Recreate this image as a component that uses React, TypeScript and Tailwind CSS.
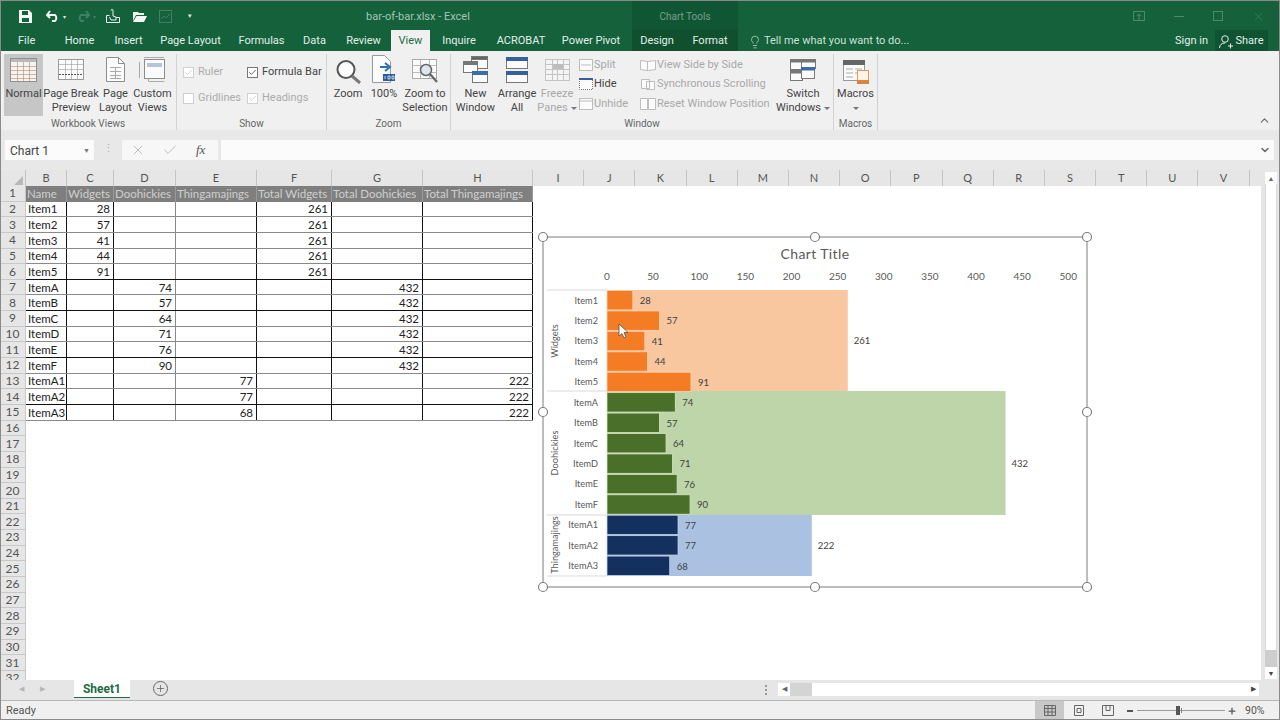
import type { ReactNode } from "react";
import { ChevronDown, ChevronUp, Lightbulb, Plus, X, Check } from "lucide-react";

const COLS = [
  { n: "B", w: "w-[41px]" },
  { n: "C", w: "w-[47px]" },
  { n: "D", w: "w-[62px]" },
  { n: "E", w: "w-[81px]" },
  { n: "F", w: "w-[75px]" },
  { n: "G", w: "w-[91px]" },
  { n: "H", w: "w-[110px]" },
];
const EMPTY_COLS = "IJKLMNOPQRSTUV".split("");

const HEAD = ["Name", "Widgets", "Doohickies", "Thingamajings", "Total Widgets", "Total Doohickies", "Total Thingamajings"];

// name, value column index, value, total
const ROWS: [string, number, number, number][] = [
  ["Item1", 1, 28, 261],
  ["Item2", 1, 57, 261],
  ["Item3", 1, 41, 261],
  ["Item4", 1, 44, 261],
  ["Item5", 1, 91, 261],
  ["ItemA", 2, 74, 432],
  ["ItemB", 2, 57, 432],
  ["ItemC", 2, 64, 432],
  ["ItemD", 2, 71, 432],
  ["ItemE", 2, 76, 432],
  ["ItemF", 2, 90, 432],
  ["ItemA1", 3, 77, 222],
  ["ItemA2", 3, 77, 222],
  ["ItemA3", 3, 68, 222],
];

const TABS = [
  { t: "Home", c: "w-[53px]" },
  { t: "Insert", c: "w-[45px]" },
  { t: "Page Layout", c: "w-[79px]" },
  { t: "Formulas", c: "w-[63px]" },
  { t: "Data", c: "w-[43px]" },
  { t: "Review", c: "w-[55px]" },
];

const Caret = () => <span className="ml-[3px] inline-block h-0 w-0 border-x-[3px] border-t-[3px] border-x-transparent border-t-[#777] align-middle" />;

function Big({ w, icon, lines, dim, sel, caret }: { w: string; icon: ReactNode; lines: string[]; dim?: boolean; sel?: boolean; caret?: boolean }) {
  return (
    <div className={`${w} flex h-[62px] shrink-0 flex-col items-center ${sel ? "bg-[#c6c6c6]" : ""}`}>
      <div className="flex h-[33px] items-center justify-center pb-[2px]">{icon}</div>
      <div className={`text-center text-[11px] leading-[14px] whitespace-nowrap ${dim ? "text-[#a8a8a8]" : "text-[#444]"}`}>
        {lines.map((l, i) => (
          <div key={l}>
            {l}
            {caret && i === lines.length - 1 && <Caret />}
          </div>
        ))}
      </div>
    </div>
  );
}

function Group({ w, label, children }: { w: string; label: string; children: ReactNode }) {
  return (
    <div className={`${w} flex h-[76px] shrink-0 flex-col border-r border-[#d2d2d2]`}>
      <div className="flex h-[62px] items-start">{children}</div>
      <div className="mt-[2px] text-center text-[10px] leading-[12px] text-[#666]">{label}</div>
    </div>
  );
}

function CheckRow({ w, label, on, dim }: { w: string; label: string; on?: boolean; dim?: boolean }) {
  return (
    <div className={`${w} flex items-center gap-[4px]`}>
      <span className={`flex h-[11px] w-[11px] shrink-0 items-center justify-center border bg-white ${dim ? "border-[#d0d0d0]" : "border-[#777]"}`}>
        {on && <Check size={9} strokeWidth={2} className={dim ? "text-[#c4c4c4]" : "text-[#333]"} />}
      </span>
      <span className={`text-[11px] whitespace-nowrap ${dim ? "text-[#acacac]" : "text-[#444]"}`}>{label}</span>
    </div>
  );
}

function SmallRow({ icon, label, dim }: { icon: ReactNode; label: string; dim?: boolean }) {
  return (
    <div className="flex h-[19.5px] items-center gap-[1px]">
      {icon}
      <span className={`text-[11px] whitespace-nowrap ${dim ? "text-[#a8a8a8]" : "text-[#444]"}`}>{label}</span>
    </div>
  );
}

const NormalIcon = (
  <svg width="27" height="24" viewBox="0 0 27 24" fill="none" stroke="#8f8f8f">
    <rect x=".5" y=".5" width="26" height="23" fill="#f6f4f0" />
    <rect x="1" y="1" width="25" height="3" fill="#b9b9b9" stroke="none" />
    <path d="M1 8.500h25M1 12.500h25M1 16.500h25M1 20.500h25M7.500 4v19M13.500 4v19M19.500 4v19" stroke="#b08c6c" strokeWidth=".6" />
  </svg>
);
const BreakIcon = (
  <svg width="26" height="21" viewBox="0 0 26 21" fill="#fbfbfb" stroke="#9a9a9a">
    <rect x=".5" y=".5" width="25" height="20" />
    <path d="M1 5.500h24M1 10.500h24M7.500 1v19M13.500 1v19M19.500 1v19" strokeWidth=".6" fill="none" />
    <path d="M1 15.500h24" stroke="#555" strokeDasharray="2 1" fill="none" />
  </svg>
);
const LayoutIcon = (
  <svg width="19" height="25" viewBox="0 0 19 25" fill="#fbfbfb" stroke="#8c8c8c">
    <path d="M.5.5h12l6 6v18H.5z" />
    <path d="M12.500.5v6h6" fill="none" />
    <path d="M4 10.500h11M4 14.500h11M4 18.500h11M4 21.500h11M9.500 10v12" stroke="#a9a9a9" fill="none" />
  </svg>
);
const CustomIcon = (
  <svg width="27" height="25" viewBox="0 0 27 25" fill="none" stroke="#8c8c8c">
    <rect x="5.500" y="2.500" width="20" height="19" fill="#fbfbfb" />
    <rect x="8" y="6" width="15" height="4" fill="#b7c4d8" stroke="none" />
    <path d="M.5 5v16M5 .5h20" stroke="#aaa" />
    <path d="M9.500 21.500v3h16" stroke="#aaa" />
  </svg>
);
const ZoomIcon = (
  <svg width="25" height="24" viewBox="0 0 25 24" fill="none" className="translate-y-[2px]">
    <circle cx="10" cy="9.500" r="8.500" stroke="#555" strokeWidth="2" fill="#fff" />
    <path d="M16 16l8 7" stroke="#777" strokeWidth="3" />
  </svg>
);
const HundredIcon = (
  <svg width="25" height="29" viewBox="0 0 25 29" fill="none">
    <path d="M.5.5h12l6 6v21H.5z" fill="#fbfbfb" stroke="#999" />
    <path d="M8 12h8M13 8l5 4-5 4" stroke="#2a6fb5" strokeWidth="2" />
    <rect x="11" y="19" width="12" height="7" fill="#2d5c96" />
    <path d="M13 21v3M16 21h2v3h-2zM20 21h2v3h-2z" stroke="#fff" strokeWidth=".7" />
  </svg>
);
const SelIcon = (
  <svg width="27" height="26" viewBox="0 0 27 26" fill="none" className="translate-y-[2px]">
    <rect x=".5" y=".5" width="24" height="19" fill="#fafafa" stroke="#aaa" />
    <path d="M1 6.500h23M1 13.500h23M8.500 1v18M17.500 1v18" stroke="#bbb" />
    <circle cx="14" cy="11" r="5.500" stroke="#666" strokeWidth="1.500" fill="#dfe6f0" />
    <path d="M18 15l7 8" stroke="#666" strokeWidth="2.200" />
  </svg>
);
const NewWinIcon = (
  <svg width="25" height="27" viewBox="0 0 25 27" fill="#fbfbfb" stroke="#777">
    <rect x="8.500" y=".5" width="16" height="12" />
    <rect x="8.500" y=".5" width="16" height="3" fill="#666" />
    <rect x=".5" y="5.500" width="14" height="11" />
    <rect x=".5" y="5.500" width="14" height="3" fill="#777" />
    <rect x="9.500" y="15.500" width="15" height="11" />
    <rect x="9.500" y="15.500" width="15" height="3" fill="#3b6ca8" stroke="#3b6ca8" />
  </svg>
);
const ArrangeIcon = (
  <svg width="22" height="26" viewBox="0 0 22 26" fill="#fbfbfb" stroke="#777">
    <rect x=".5" y=".5" width="21" height="11" />
    <rect x=".5" y=".5" width="21" height="3" fill="#34619e" stroke="#34619e" />
    <rect x=".5" y="14.500" width="21" height="11" />
    <rect x=".5" y="14.500" width="21" height="3" fill="#34619e" stroke="#34619e" />
  </svg>
);
const FreezeIcon = (
  <svg width="25" height="22" viewBox="0 0 25 22" fill="#f4f4f4" stroke="#c4c4c4">
    <rect x=".5" y=".5" width="24" height="21" />
    <path d="M1 5.500h23M1 10.500h23M1 15.500h23M7.500 1v20M12.500 1v20M18.500 1v20" fill="none" />
    <rect x="8" y="5" width="10" height="5" fill="#bdbdbd" stroke="none" />
  </svg>
);
const SwitchIcon = (
  <svg width="26" height="22" viewBox="0 0 26 22" fill="#fbfbfb" stroke="#777">
    <rect x=".5" y=".5" width="13" height="10" />
    <rect x=".5" y=".5" width="13" height="2.500" fill="#777" />
    <rect x="11.500" y=".5" width="14" height="9" />
    <rect x="11.500" y=".5" width="14" height="2.500" fill="#777" />
    <rect x=".5" y="11.500" width="12" height="10" />
    <rect x=".5" y="11.500" width="12" height="2.500" fill="#777" />
    <rect x="11.500" y="8.500" width="13" height="11" />
    <rect x="11.500" y="8.500" width="13" height="2.500" fill="#3b6ca8" stroke="#3b6ca8" />
  </svg>
);
const MacroIcon = (
  <svg width="26" height="24" viewBox="0 0 26 24" fill="#fbfbfb" stroke="#999" className="translate-y-[2px]">
    <rect x=".5" y=".5" width="21" height="20" />
    <rect x="0" y="0" width="22" height="5" fill="#666" stroke="none" />
    <path d="M3 9h7M12 9h7M3 13h7M12 13h3M3 17h7" fill="none" stroke="#aaa" />
    <rect x="14.500" y="10.500" width="11" height="13" fill="#fdf3e6" stroke="#d99a5e" />
    <rect x="14" y="20" width="12" height="4" fill="#e0823a" stroke="none" />
  </svg>
);
const HideIcon = (
  <svg width="14" height="12" viewBox="0 0 14 12" fill="#fbfbfb" className="shrink-0">
    <rect x=".5" y="1" width="13" height="10.500" stroke="#777" strokeDasharray="1 1" />
    <rect x="0" y="0" width="14" height="2" fill="#34619e" />
  </svg>
);
const mini = (d: string, c = "#bdbdbd") => (
  <svg width="14" height="12" viewBox="0 0 14 12" fill="#fbfbfb" stroke={c} className="shrink-0">
    <rect x=".5" y=".5" width="13" height="11" />
    <path d={d} fill="none" />
  </svg>
);
const wide = (d: string) => (
  <svg width="16" height="12" viewBox="0 0 16 12" fill="#fbfbfb" stroke="#bdbdbd" className="shrink-0">
    <path d={d} />
  </svg>
);

function Ribbon() {
  return (
    <div className="flex h-[79px] shrink-0 bg-[#f0f0f0] pt-[3px]">
      <Group w="w-[177px]" label="Workbook Views">
        <div className="ml-1">
          <Big w="w-[39px]" sel icon={NormalIcon} lines={["Normal"]} />
        </div>
        <Big w="w-[56px]" icon={BreakIcon} lines={["Page Break", "Preview"]} />
        <Big w="w-[33px]" icon={LayoutIcon} lines={["Page", "Layout"]} />
        <Big w="w-[41px]" icon={CustomIcon} lines={["Custom", "Views"]} />
      </Group>
      <Group w="w-[150px]" label="Show">
        <div className="flex flex-col gap-[7px] pl-[6px] pt-[9px]">
          <div className="flex h-[19px] items-center">
            <CheckRow w="w-[64px]" label="Ruler" on dim />
            <CheckRow w="w-[76px]" label="Formula Bar" on />
          </div>
          <div className="flex h-[19px] items-center">
            <CheckRow w="w-[64px]" label="Gridlines" dim />
            <CheckRow w="w-[76px]" label="Headings" on dim />
          </div>
        </div>
      </Group>
      <Group w="w-[124px]" label="Zoom">
        <div className="ml-[3px]">
          <Big w="w-[36px]" icon={ZoomIcon} lines={["Zoom"]} />
        </div>
        <Big w="w-[36px]" icon={HundredIcon} lines={["100%"]} />
        <Big w="w-[46px]" icon={SelIcon} lines={["Zoom to", "Selection"]} />
      </Group>
      <Group w="w-[383px]" label="Window">
        <div className="ml-1">
          <Big w="w-[41px]" icon={NewWinIcon} lines={["New", "Window"]} />
        </div>
        <Big w="w-[42px]" icon={ArrangeIcon} lines={["Arrange", "All"]} />
        <Big w="w-[38px]" dim caret icon={FreezeIcon} lines={["Freeze", "Panes"]} />
        <div className="ml-[3px] flex w-[61px] shrink-0 flex-col pt-[1px]">
          <SmallRow dim icon={mini("M2 6h10")} label="Split" />
          <SmallRow icon={HideIcon} label="Hide" />
          <SmallRow dim icon={mini("M1 3h12")} label="Unhide" />
        </div>
        <div className="flex w-[137px] shrink-0 flex-col pt-[1px]">
          <SmallRow dim icon={wide("M.5 1.500l7 1v9l-7-1zM15.500 1.500l-8 1v9l8-1z")} label="View Side by Side" />
          <SmallRow dim icon={wide("M1.500 1.500h8v9h-8zM6.500 3.500h8v8h-8z")} label="Synchronous Scrolling" />
          <SmallRow dim icon={wide("M.5.5h7v11h-7zM8.500.5h7v11h-7z")} label="Reset Window Position" />
        </div>
        <Big w="w-[52px]" caret icon={SwitchIcon} lines={["Switch", "Windows"]} />
      </Group>
      <Group w="w-[44px]" label="Macros">
        <div className="flex w-[44px] flex-col items-center">
          <div className="flex h-[33px] items-center justify-center pb-[2px]">{MacroIcon}</div>
          <div className="text-[11px] leading-[14px] text-[#444]">Macros</div>
          <div className="flex h-[14px] items-center">
            <span className="h-0 w-0 border-x-[3px] border-t-[3px] border-x-transparent border-t-[#777]" />
          </div>
        </div>
      </Group>
      <div className="flex flex-1 items-end justify-end pb-[3px] pr-[9px]">
        <ChevronUp size={13} className="text-[#666]" />
      </div>
    </div>
  );
}

function TitleBar() {
  return (
    <div className="relative flex h-[30px] shrink-0 items-center bg-[#14613c] pt-[2px]">
      <div className="flex w-[366px] shrink-0 items-center pl-[19px]">
        <svg width="13" height="13" viewBox="0 0 13 13" className="mr-[14px]" fill="#f2f6f3">
          <path d="M0 0h10l3 3v10H0zM3 1v4h6V1zM3 8v4h7V8z" fillRule="evenodd" />
        </svg>
        <svg width="14" height="12" viewBox="0 0 14 12" fill="none" stroke="#f2f6f3" strokeWidth="2" className="mr-[3px]">
          <path d="M1 5h8a4 4 0 0 1 0 6H6M4 1L1 5l3 3" />
        </svg>
        <span className="mr-[10px] text-[6px] text-[#dfe9e3]">▾</span>
        <svg width="14" height="12" viewBox="0 0 14 12" fill="none" stroke="#3f8263" strokeWidth="2" className="mr-[3px]">
          <path d="M13 5H5a4 4 0 0 0 0 6h3M10 1l3 4-3 3" />
        </svg>
        <span className="mr-[10px] text-[6px] text-[#3f8263]">▾</span>
        <svg width="14" height="14" viewBox="0 0 14 14" fill="none" stroke="#eef4f0" className="mr-[13px]">
          <path d="M.5 6.500h3M10 8.500h3.500v5H.5v-7M5 1.500a1 1 0 0 1 2 0V7l3 1v3H5L3.500 8" />
        </svg>
        <svg width="14" height="11" viewBox="0 0 14 11" fill="#f2f6f3" className="mr-[12px]">
          <path d="M0 1h5l1 1h5v2H3L0 10zM3.500 5H14l-3 6H0z" />
        </svg>
        <svg width="13" height="13" viewBox="0 0 13 13" fill="none" stroke="#3f8263" className="mr-[16px]">
          <rect x=".5" y=".5" width="12" height="12" />
          <path d="M2 9l3-3 2 2 4-4" />
        </svg>
        <span className="text-[7px] leading-[8px] text-[#dfe9e3]">▾</span>
      </div>
      <span className="w-[266px] shrink-0 pt-[2px] text-[11px] text-[#a6c6b4]">bar-of-bar.xlsx - Excel</span>
      <div className="flex h-[30px] w-[106px] shrink-0 items-center justify-center text-[10px] text-[#a6c6b4]">Chart Tools</div>
      <div className="flex flex-1 items-center justify-end gap-[29px] pr-[15px]">
        <svg width="12" height="10" viewBox="0 0 12 10" fill="none" stroke="#4c8a6d">
          <path d="M.5.5h11v9H.5zM6 9V3M4 5l2-2 2 2" />
        </svg>
        <span className="h-px w-[10px] bg-[#4c8a6d]" />
        <span className="h-[10px] w-[10px] border border-[#4c8a6d]" />
        <X size={13} strokeWidth={1} className="text-[#4c8a6d]" />
      </div>
      {/* darker contextual tab block */}
      <div className="pointer-events-none absolute left-[632px] top-0 h-[30px] w-[106px] bg-[#0a3f24]/30" />
    </div>
  );
}

function TabBar() {
  return (
    <div className="flex h-[21px] shrink-0 items-center bg-[#14613c] text-[11px] text-[#e3efe8]">
      <div className="w-[53px] pl-[18px] pt-[2px]">File</div>
      {TABS.map((t) => (
        <div key={t.t} className={`${t.c} shrink-0 pt-[2px] text-center`}>
          {t.t}
        </div>
      ))}
      <div className="flex h-[21px] w-[39px] shrink-0 items-center justify-center bg-[#f0f0f0] pt-[2px] text-[#1c6b44]">View</div>
      <div className="w-[58px] shrink-0 pt-[2px] text-center">Inquire</div>
      <div className="w-[66px] shrink-0 pt-[2px] text-center">ACROBAT</div>
      <div className="w-[78px] shrink-0 pr-1 pt-[2px] text-center">Power Pivot</div>
      <div className="flex h-[21px] w-[106px] shrink-0 items-center bg-[#10502f] pt-[2px]">
        <span className="w-[50px] text-center">Design</span>
        <span className="w-[56px] text-center">Format</span>
      </div>
      <div className="flex flex-1 items-center pl-[10px] pt-[2px] text-[#cfe0d6]">
        <Lightbulb size={14} strokeWidth={1.2} className="mr-[2px]" />
        Tell me what you want to do...
      </div>
      <span className="mr-[7px] pt-[2px]">Sign in</span>
      <div className="mr-[12px] flex h-[21px] w-[53px] items-center justify-center gap-[2px] bg-[#0f5332] pt-[2px]">
        <svg width="14" height="14" viewBox="0 0 14 14" fill="none" stroke="#e3efe8">
          <circle cx="6" cy="4" r="3.300" />
          <path d="M.5 13c0-3 2-5 5.500-5M9 11h5M11.500 8.500v5" />
        </svg>
        Share
      </div>
    </div>
  );
}

function FormulaBar() {
  return (
    <div className="flex h-[40px] shrink-0 items-start bg-[#e8e8e8] pl-[5px] pt-[10px]">
      <div className="flex h-[20px] w-[89px] items-center justify-between bg-[#fbfbfb] pl-[5px] pr-[4px] pt-[2px] text-[12px] text-[#444]">
        Chart 1
        <span className="text-[7px] text-[#777]">▼</span>
      </div>
      <div className="flex w-[28px] justify-center pt-[2px] text-[11px] leading-[14px] text-[#aaa]">⋮</div>
      <div className="flex h-[20px] w-[96px] items-center bg-[#f7f7f7]">
        <X size={16} strokeWidth={1.5} className="ml-[8px] text-[#bdbdbd]" />
        <Check size={16} strokeWidth={1.5} className="ml-[16px] text-[#bdbdbd]" />
        <span className="ml-[18px] font-['Liberation_Serif',serif] text-[13px] italic text-[#555]">fx</span>
      </div>
      <div className="ml-[3px] flex h-[20px] w-[1053px] items-center justify-end bg-[#fbfbfb] pr-[3px]">
        <ChevronDown size={12} strokeWidth={3} className="text-[#666]" />
      </div>
    </div>
  );
}

function DataCell({ w, children, right, gray }: { w: string; children?: ReactNode; right?: boolean; gray?: boolean }) {
  return (
    <div
      className={`${w} flex shrink-0 items-center border-r pl-[2px] pr-[3px] text-[11.5px] text-[#222] ${right ? "justify-end" : ""} ${gray ? "border-[#888]" : "border-[#111]"}`}
    >
      {children}
    </div>
  );
}

function Sheet() {
  const rowNums = Array.from({ length: 32 }, (_, i) => i + 1);
  return (
    <div className="flex flex-1 overflow-hidden bg-white font-['Lato',sans-serif]">
      <div className="flex w-[1261px] shrink-0 flex-col">
        <div className="flex h-[16px] shrink-0 bg-[#e6e6e6] text-[11px] text-[#555]">
          <div className="flex w-[26px] shrink-0 items-end justify-end border-r border-[#c4c4c4] pb-[1px] pr-[2px]">
            <span className="h-0 w-0 border-b-[9px] border-l-[9px] border-b-[#b8b8b8] border-l-transparent" />
          </div>
          {COLS.map((c) => (
            <div key={c.n} className={`${c.w} shrink-0 border-r border-[#c4c4c4] text-center leading-[15px]`}>
              {c.n}
            </div>
          ))}
          {EMPTY_COLS.map((n) => (
            <div key={n} className="w-[51.2px] shrink-0 border-r border-[#c4c4c4] text-center leading-[15px]">
              {n}
            </div>
          ))}
        </div>
        <div className="flex flex-col">
          {rowNums.map((n) => {
            const row = ROWS[n - 2];
            const darkLine = [6, 8, 11, 14].includes(n);
            return (
              <div key={n} className="flex h-[15.65px] shrink-0">
                <div className="flex w-[26px] shrink-0 items-center justify-center border-b border-r border-[#c8c8c8] bg-[#e6e6e6] text-[12px] text-[#555]">
                  {n}
                </div>
                {n === 1 &&
                  HEAD.map((h, i) => (
                    <div
                      key={h}
                      className={`${COLS[i].w} flex shrink-0 items-center overflow-hidden whitespace-nowrap border-r border-[#9a9a9a] bg-[#7f7f7f] px-[1px] text-[11.5px] text-[#cfcfcf]`}
                    >
                      {h}
                    </div>
                  ))}
                {row && (
                  <div className={`flex border-b ${darkLine ? "border-[#111]" : "border-[#8a8a8a]"}`}>
                    {COLS.map((c, i) => {
                      let val: ReactNode = null;
                      if (i === 0) val = row[0];
                      else if (i === row[1]) val = row[2];
                      else if (i === row[1] + 3) val = row[3];
                      return (
                        <DataCell key={c.n} w={c.w} right={i > 0} gray={i === 2}>
                          {val}
                        </DataCell>
                      );
                    })}
                  </div>
                )}
              </div>
            );
          })}
        </div>
      </div>
      <div className="flex flex-1 flex-col items-start bg-[#e6e6e6] pl-[4px]">
        <div className="h-[2px]" />
        <div className="flex h-[12px] w-[12px] items-center justify-center bg-white text-[7px] text-[#666]">▲</div>
        <div className="w-[12px] flex-1 border-x border-[#d8d8d8] bg-white" />
        <div className="h-[17px] w-[12px] bg-[#cdcdcd]" />
        <div className="mb-[1px] flex h-[12px] w-[12px] items-center justify-center bg-white text-[7px] text-[#444]">▼</div>
      </div>
    </div>
  );
}

function barRow(i: number) {
  return 290 + (286 / 14) * i;
}

function Chart() {
  const x0 = 64;
  const scale = 0.9225;
  const oy = 237;
  const ox = 543;
  const barColor = (c: number) => (c === 1 ? "#f47c25" : c === 2 ? "#4a6f29" : "#14305f");
  const edge = (c: number) => (c === 1 ? "#fbd3b2" : c === 2 ? "#d5e5c6" : "#c4d4ec");
  const handles: [number, number][] = [
    [0, 0],
    [272, 0],
    [544, 0],
    [0, 175],
    [544, 175],
    [0, 350],
    [272, 350],
    [544, 350],
  ];
  return (
    <svg
      width="560"
      height="366"
      viewBox="-8 -8 560 366"
      className="absolute left-[535px] top-[229px] font-['Lato',sans-serif]"
    >
      <rect x="0" y="0" width="544" height="350" fill="#fff" stroke="#a8a8a8" strokeWidth="1.500" />
      <text x="272" y="22" textAnchor="middle" fontSize="14" fill="#595959" letterSpacing=".4">
        Chart Title
      </text>
      {[0, 50, 100, 150, 200, 250, 300, 350, 400, 450, 500].map((v) => (
        <text key={v} x={x0 + v * scale} y="43" textAnchor="middle" fontSize="10" fill="#595959">
          {v}
        </text>
      ))}
      <rect x={x0} y={290 - oy} width={261 * scale} height="101" fill="#f8c7a0" />
      <rect x={x0} y={391 - oy} width={432 * scale} height="124" fill="#bdd5a8" />
      <rect x={x0} y={515 - oy} width={222 * scale} height="61" fill="#aac1e2" />
      {ROWS.map((r, i) => {
        const y = barRow(i) - oy;
        const w = r[2] * scale;
        return (
          <g key={r[0]}>
            <rect x={x0} y={y + 0.5} width={w} height={19.4} fill={barColor(r[1])} stroke={edge(r[1])} strokeWidth=".8" />
            <text x={55} y={y + 13.5} textAnchor="end" fontSize="9.200" fill="#595959">
              {r[0]}
            </text>
            <text x={x0 + w + 7} y={y + 14} fontSize="9.500" fill="#404040">
              {r[2]}
            </text>
          </g>
        );
      })}
      <path d="M4 53H64M4 154H64M4 278H64M4 339H64" stroke="#d9d9d9" />
      <text transform="translate(15 104) rotate(-90)" textAnchor="middle" fontSize="9.200" fill="#595959">
        Widgets
      </text>
      <text transform="translate(15 216) rotate(-90)" textAnchor="middle" fontSize="9.200" fill="#595959">
        Doohickies
      </text>
      <text transform="translate(15 308) rotate(-90)" textAnchor="middle" fontSize="9.200" fill="#595959">
        Thingamajings
      </text>
      <text x={x0 + 261 * scale + 6} y="107" fontSize="9.500" fill="#404040">
        261
      </text>
      <text x={x0 + 432 * scale + 6} y="230" fontSize="9.500" fill="#404040">
        432
      </text>
      <text x={x0 + 222 * scale + 6} y="312" fontSize="9.500" fill="#404040">
        222
      </text>
      {handles.map(([x, y]) => (
        <circle key={`${x}-${y}`} cx={x} cy={y} r="4.500" fill="#fff" stroke="#7f7f7f" strokeWidth="1.200" />
      ))}
      {/* mouse pointer */}
      <path
        transform={`translate(${619 - ox} ${324 - oy})`}
        d="M0 0v12l3-2.500 2 4.500 2-1-2-4.500h4z"
        fill="#fff"
        stroke="#444"
        strokeWidth=".7"
      />
    </svg>
  );
}

function SheetTabs() {
  return (
    <div className="flex h-[20px] shrink-0 items-start bg-[#e6e6e6]">
      <div className="flex h-[18px] w-[74px] items-center gap-[16px] pl-[19px] text-[7px] text-[#b5b5b5]">
        <span>◀</span>
        <span>▶</span>
      </div>
      <div className="flex h-[18px] w-[56px] items-center justify-center border-b border-[#1f6b46] bg-white text-[12px] font-bold text-[#1f6b46]">
        Sheet1
      </div>
      <div className="ml-[23px] mt-[1px] flex h-[15px] w-[15px] items-center justify-center rounded-full border border-[#666]">
        <Plus size={11} strokeWidth={1.5} className="text-[#555]" />
      </div>
      <div className="ml-[597px] mt-[3px] flex h-[13px] w-[495px] items-center">
        <div className="mr-[11px] flex flex-col gap-[2px]">
          <span className="h-[2px] w-[2px] bg-[#999]" />
          <span className="h-[2px] w-[2px] bg-[#999]" />
          <span className="h-[2px] w-[2px] bg-[#999]" />
        </div>
        <div className="flex h-[13px] w-[12px] items-center justify-center bg-white text-[7px] text-[#666]">◀</div>
        <div className="h-[13px] w-[22px] bg-[#d4d4d4]" />
        <div className="h-[13px] w-[435px] bg-white" />
        <div className="flex h-[13px] w-[12px] items-center justify-center bg-white text-[7px] text-[#444]">▶</div>
      </div>
    </div>
  );
}

function StatusBar() {
  return (
    <div className="flex h-[20px] shrink-0 items-center border-t border-[#b8b8b8] bg-[#f0f0f0] text-[11px] text-[#555]">
      <span className="ml-[6px] pt-[2px]">Ready</span>
      <div className="ml-auto flex h-[19px] items-center">
        <div className="flex h-[19px] w-[29px] items-center justify-center bg-[#c8c8c8]">
          <svg width="12" height="11" viewBox="0 0 12 11" fill="none" stroke="#666">
            <path d="M.5.5h11v10H.5zM.5 3.500h11M.5 7h11M4 .5v10M8 .5v10" />
          </svg>
        </div>
        <div className="flex h-[19px] w-[29px] items-center justify-center">
          <svg width="10" height="11" viewBox="0 0 10 11" fill="none" stroke="#666">
            <path d="M.5.5h9v10h-9zM3 3.500h4v4H3z" />
          </svg>
        </div>
        <div className="flex h-[19px] w-[29px] items-center justify-center">
          <svg width="12" height="11" viewBox="0 0 12 11" fill="none" stroke="#666">
            <path d="M.5.5h11v10H.5zM4 .5v5h4v-5" />
          </svg>
        </div>
        <span className="ml-[5px] h-[2px] w-[6px] bg-[#555]" />
        <div className="relative ml-[4px] h-px w-[88px] bg-[#999]">
          <span className="absolute left-[39px] top-[-4px] h-[9px] w-[4px] bg-[#555]" />
          <span className="absolute left-[44px] top-[-2px] h-[5px] w-px bg-[#888]" />
        </div>
        <Plus size={10} strokeWidth={3} className="ml-[2px] text-[#555]" />
        <span className="ml-[8px] mr-[15px] w-[20px] text-[10.5px]">90%</span>
      </div>
    </div>
  );
}

export default function App() {
  return (
    <div className="relative flex h-[720px] w-[1280px] flex-col overflow-hidden bg-[#e6e6e6] font-['Roboto',sans-serif]">
      <TitleBar />
      <TabBar />
      <Ribbon />
      <FormulaBar />
      <Sheet />
      <SheetTabs />
      <StatusBar />
      <Chart />
      {/* window frame */}
      <div className="pointer-events-none absolute inset-0 border border-[#8a8a8a]" />
    </div>
  );
}
